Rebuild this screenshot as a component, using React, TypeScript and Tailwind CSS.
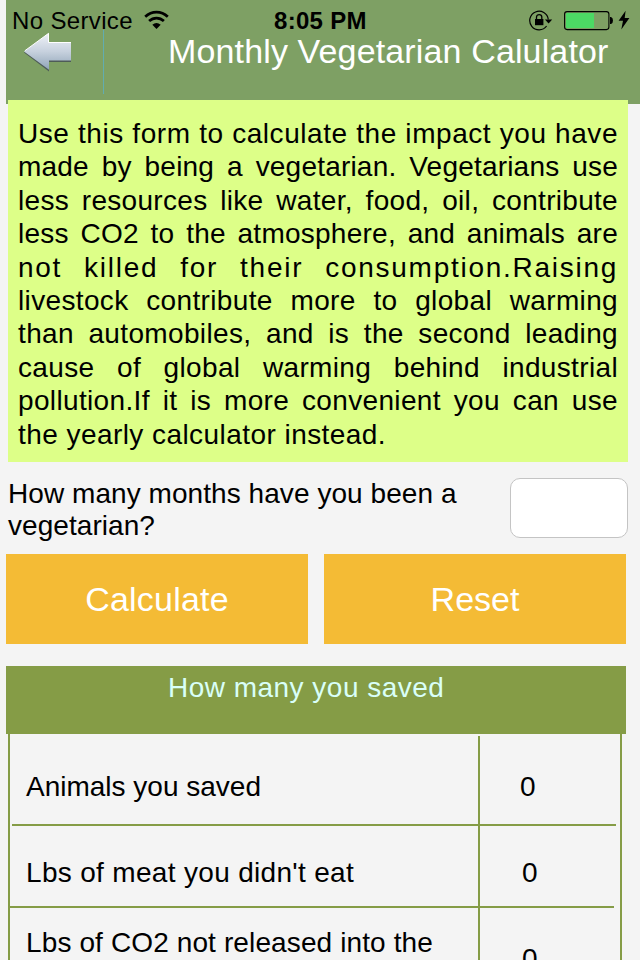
const introLines = [
  { text: "Use this form to calculate the impact you have", cls: "tracking-[0.55px]" },
  { text: "made by being a vegetarian. Vegetarians use", cls: "tracking-[0.2px]" },
  { text: "less resources like water, food, oil, contribute", cls: "tracking-[0.3px]" },
  { text: "less CO2 to the atmosphere, and animals are", cls: "tracking-[0.25px]" },
  { text: "not killed for their consumption.Raising", cls: "tracking-[1.73px]" },
  { text: "livestock contribute more to global warming", cls: "tracking-[0.35px]" },
  { text: "than automobiles, and is the second leading", cls: "tracking-[0.35px]" },
  { text: "cause of global warming behind industrial", cls: "tracking-[0.35px]" },
  { text: "pollution.If it is more convenient you can use", cls: "tracking-[0.35px]" },
];

function WifiIcon() {
  return (
    <svg className="ml-[10px] mt-[10px] h-[20px] w-[26px]" viewBox="0 0 26 20" fill="none" stroke="#000" strokeWidth="2.7">
      <path d="M1.2 6.8C7.8.6 17.2.6 23.8 6.8" />
      <path d="M5.1 11.1C9.4 7 15.6 7 19.9 11.1" />
      <path d="M8.3 14.7Q12.5 11.2 16.7 14.7L12.5 19Z" fill="#000" stroke="none" />
    </svg>
  );
}

function RotationLockIcon() {
  return (
    <svg className="mt-[9px] h-[22px] w-[24px]" viewBox="0 0 24 22" fill="none" stroke="#000" strokeWidth="1.2">
      <path d="M17.6 17A9.3 9.3 0 1 1 19.3 10.5" />
      <path d="M15.9 10.4H23.2L19.6 14.4Z" fill="#000" stroke="none" />
      <rect x="6" y="10" width="8.4" height="6.2" fill="#000" stroke="none" />
      <path d="M7.5 10.5V8C7.5 4.7 12.8 4.7 12.8 8V10.5" strokeWidth="1.3" />
    </svg>
  );
}

function BatteryIcon() {
  return (
    <svg className="ml-[11px] mt-[11px] h-[20px] w-[50px]" viewBox="0 0 50 20">
      <rect x=".6" y=".6" width="44.3" height="18" rx="2.5" fill="none" stroke="#000" strokeWidth="1.1" />
      <path d="M3 2H30V17H3Q2 17 2 16V3Q2 2 3 2Z" fill="#4cd964" />
      <path d="M46 6H47Q49 6.6 49 9.5Q49 12.4 47 13H46Z" />
    </svg>
  );
}

function BoltIcon() {
  return (
    <svg className="ml-[4px] mt-[10px] h-[20px] w-[12px]" viewBox="0 0 12 20">
      <path d="M7.6.7L.6 10.8H5L3.3 19.4L11.4 8.1H6.7Z" />
    </svg>
  );
}

function BackArrow() {
  return (
    <svg className="h-[40px] w-[50px]" viewBox="0 0 50 40">
      <defs>
        <linearGradient id="arrow" x1="0" y1="0" x2="0" y2="1">
          <stop offset="0" stopColor="#f0f3f8" />
          <stop offset=".5" stopColor="#c7d1de" />
          <stop offset="1" stopColor="#8fa4b7" />
        </linearGradient>
      </defs>
      <path d="M1 20.5L26 2V11H48V30H26V39.4Z" fill="#4e5c58" />
      <path d="M1 19.5L26 1V10H48V28.4H26V37.8Z" fill="url(#arrow)" />
      <path d="M1.8 18.8L25.5 1.4V10.5H48" fill="none" stroke="#fff" strokeWidth="1" />
    </svg>
  );
}

export default function App() {
  return (
    <div className="flex h-[960px] w-[640px] flex-col overflow-hidden bg-[#f4f4f4] font-['Liberation_Sans',Arial,sans-serif] text-[28px] text-black">
      <header className="relative ml-[6px] h-[104px] shrink-0 bg-[#7ea064]">
        <div className="flex h-[32px] text-[24px] leading-[42px] whitespace-nowrap">
          <div className="flex w-[268px] pl-[6px]">
            <span className="w-[122px] tracking-[0.35px]">No Service</span>
            <WifiIcon />
          </div>
          <div className="w-[255px] font-bold tracking-[0.3px]">8:05 PM</div>
          <RotationLockIcon />
          <BatteryIcon />
          <BoltIcon />
        </div>
        <div className="flex">
          <div className="w-[97px] pl-[17px]">
            <BackArrow />
          </div>
          <div className="-mt-[2px] h-[64px] w-px bg-[#62adb0]" />
          <h1 className="-mt-[1px] ml-[64px] text-[34px] leading-[40px] tracking-[0.14px] whitespace-nowrap text-white">
            Monthly Vegetarian Calulator
          </h1>
        </div>
      </header>

      <section className="relative -mt-1 ml-2 h-[362px] w-[620px] shrink-0 bg-[#ddff88] px-[10px] pt-[17px] leading-[33.4px]">
        {introLines.map((line) => (
          <div key={line.text} className={"[text-align-last:justify] whitespace-nowrap " + line.cls}>
            {line.text}
          </div>
        ))}
        <div className="tracking-[0.44px]">the yearly calculator instead.</div>
      </section>

      <div className="ml-2 flex h-[92px] w-[620px] shrink-0 justify-between pt-4">
        <label htmlFor="months" className="w-[480px] leading-[32px] tracking-[0.06px]">
          How many months have you been a vegetarian?
        </label>
        <input id="months" className="h-[60px] w-[118px] rounded-[10px] border border-[#c4c4c4] bg-white px-2 outline-none" />
      </div>

      <div className="ml-[6px] flex shrink-0 gap-4 text-[34px] text-white">
        <button className="h-[90px] w-[302px] bg-[#f4bb35] tracking-[0.2px]">Calculate</button>
        <button className="h-[90px] w-[302px] bg-[#f4bb35]">Reset</button>
      </div>

      <h2 className="mt-[22px] ml-[6px] h-[68px] w-[620px] shrink-0 bg-[#859c46] pl-[162px] pt-[6px] leading-[32px] tracking-[0.48px] text-[#d9fff8]">
        How many you saved
      </h2>
      <div className="ml-2 h-[226px] w-[614px] shrink-0 border-x-2 border-[#859c46]">
        <div className="flex h-[90px]">
          <div className="w-[468px] pl-4 pt-[37px] leading-[32px]">Animals you saved</div>
          <div className="mt-[2px] w-[140px] border-l-2 border-[#859c46] pl-[40px] pt-[35px] leading-[32px]">0</div>
        </div>
        <div className="ml-[2px] h-[2px] w-[604px] bg-[#859c46]" />
        <div className="flex h-[80px]">
          <div className="w-[468px] pl-4 pt-[31px] leading-[32px] tracking-[0.32px]">Lbs of meat you didn't eat</div>
          <div className="w-[140px] border-l-2 border-[#859c46] pl-[42px] pt-[31px] leading-[32px]">0</div>
        </div>
        <div className="h-[2px] w-[604px] bg-[#859c46]" />
        <div className="flex h-[52px]">
          <div className="w-[468px] pl-4 pt-[19px] leading-[32px] tracking-[0.12px] whitespace-nowrap">Lbs of CO2 not released into the</div>
          <div className="w-[140px] border-l-2 border-[#859c46] pl-[42px] pt-[35px] leading-[32px]">0</div>
        </div>
      </div>
    </div>
  );
}
